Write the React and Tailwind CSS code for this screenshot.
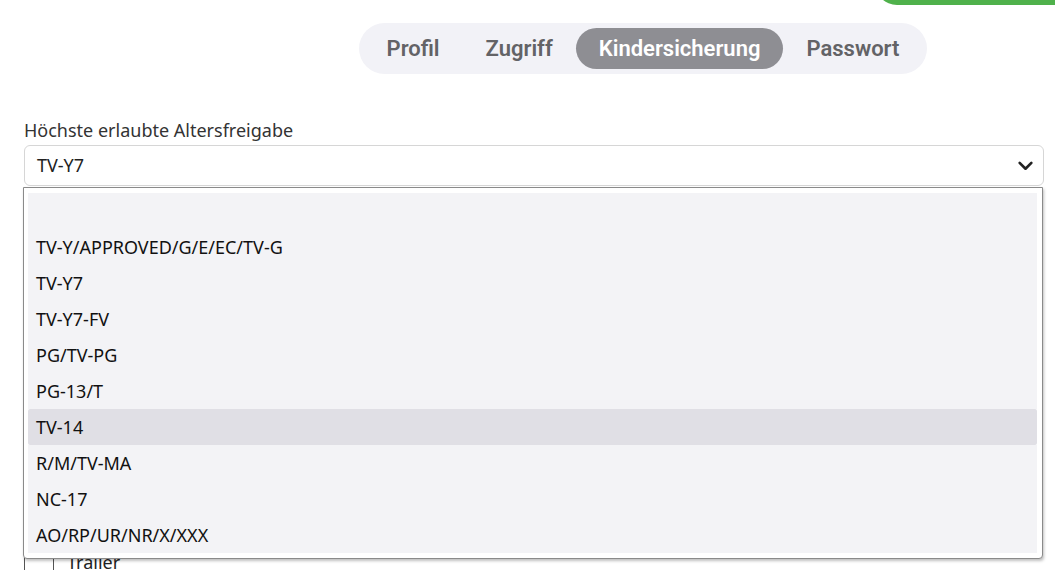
import { useState } from 'react';

const TABS = ['Profil', 'Zugriff', 'Kindersicherung', 'Passwort'];

const RATINGS = [
  '',
  'TV-Y/APPROVED/G/E/EC/TV-G',
  'TV-Y7',
  'TV-Y7-FV',
  'PG/TV-PG',
  'PG-13/T',
  'TV-14',
  'R/M/TV-MA',
  'NC-17',
  'AO/RP/UR/NR/X/XXX',
];

export default function App() {
  const [activeTab, setActiveTab] = useState('Kindersicherung');
  const [rating, setRating] = useState('TV-Y7');
  const [hovered, setHovered] = useState('TV-14');

  return (
    <div className="relative w-[1055px] h-[570px] overflow-hidden bg-white font-['Noto_Sans',sans-serif] text-[#222]">
      {/* save button peeking in from above */}
      <div className="absolute right-0 top-[-40px] w-[180px] h-[45px] rounded-bl-[22px] bg-[#4fb14b]" />

      <div className="flex justify-center pt-[23px] pl-[231px]">
        <nav className="flex items-center h-[51px] px-[5px] rounded-full bg-[#f2f2f7] font-['Roboto',sans-serif]">
          {TABS.map((tab) => (
            <button
              key={tab}
              type="button"
              onClick={() => setActiveTab(tab)}
              className={
                tab === activeTab
                  ? 'h-[41px] px-[23px] rounded-full bg-[#8e8e93] text-white text-[22px] font-semibold'
                  : 'h-[41px] px-[23px] rounded-full text-[#636366] text-[22px] font-semibold'
              }
            >
              {tab}
            </button>
          ))}
        </nav>
      </div>

      <div className="px-[24px] pt-[43px] pr-[11px]">
        <label className="block text-[18px] leading-[26px] text-[#333]">Höchste erlaubte Altersfreigabe</label>

        <div className="relative mt-[2px]">
          <div className="flex items-center justify-between h-[41px] pl-[12px] pr-[9px] border border-[#d6d6d6] rounded-[6px] bg-white">
            <span className="text-[18px]">{rating}</span>
            <svg width="17" height="17" viewBox="0 0 16 16" fill="none">
              <path d="M2.5 5.5 8 11l5.5-5.5" stroke="#222" strokeWidth="2.5" strokeLinecap="round" strokeLinejoin="round" />
            </svg>
          </div>

          <ul className="absolute left-[-1px] right-[1px] top-[42px] z-10 flex flex-col pl-[4px] pr-[5px] py-[5px] bg-white border border-[#8a8a8a] rounded-b-[4px] shadow-[1px_2px_3px_rgba(0,0,0,0.25)]">
            {RATINGS.map((r) => (
              <li
                key={r || 'none'}
                onMouseEnter={() => setHovered(r)}
                onClick={() => setRating(r)}
                className={
                  hovered === r
                    ? 'h-[36px] flex items-center pl-[8px] bg-[#e0dfe5] text-[18px] text-[#111] rounded-[2px]'
                    : 'h-[36px] flex items-center pl-[8px] bg-[#f3f3f6] text-[18px] text-[#111]'
                }
              >
                {r}
              </li>
            ))}
          </ul>
        </div>

        <div className="mt-[363px] flex items-center">
          <div className="w-[30px] h-[22px] border-x border-[#555]" />
          <span className="ml-[13px] text-[18px] leading-[26px]">Trailer</span>
        </div>
      </div>
    </div>
  );
}
